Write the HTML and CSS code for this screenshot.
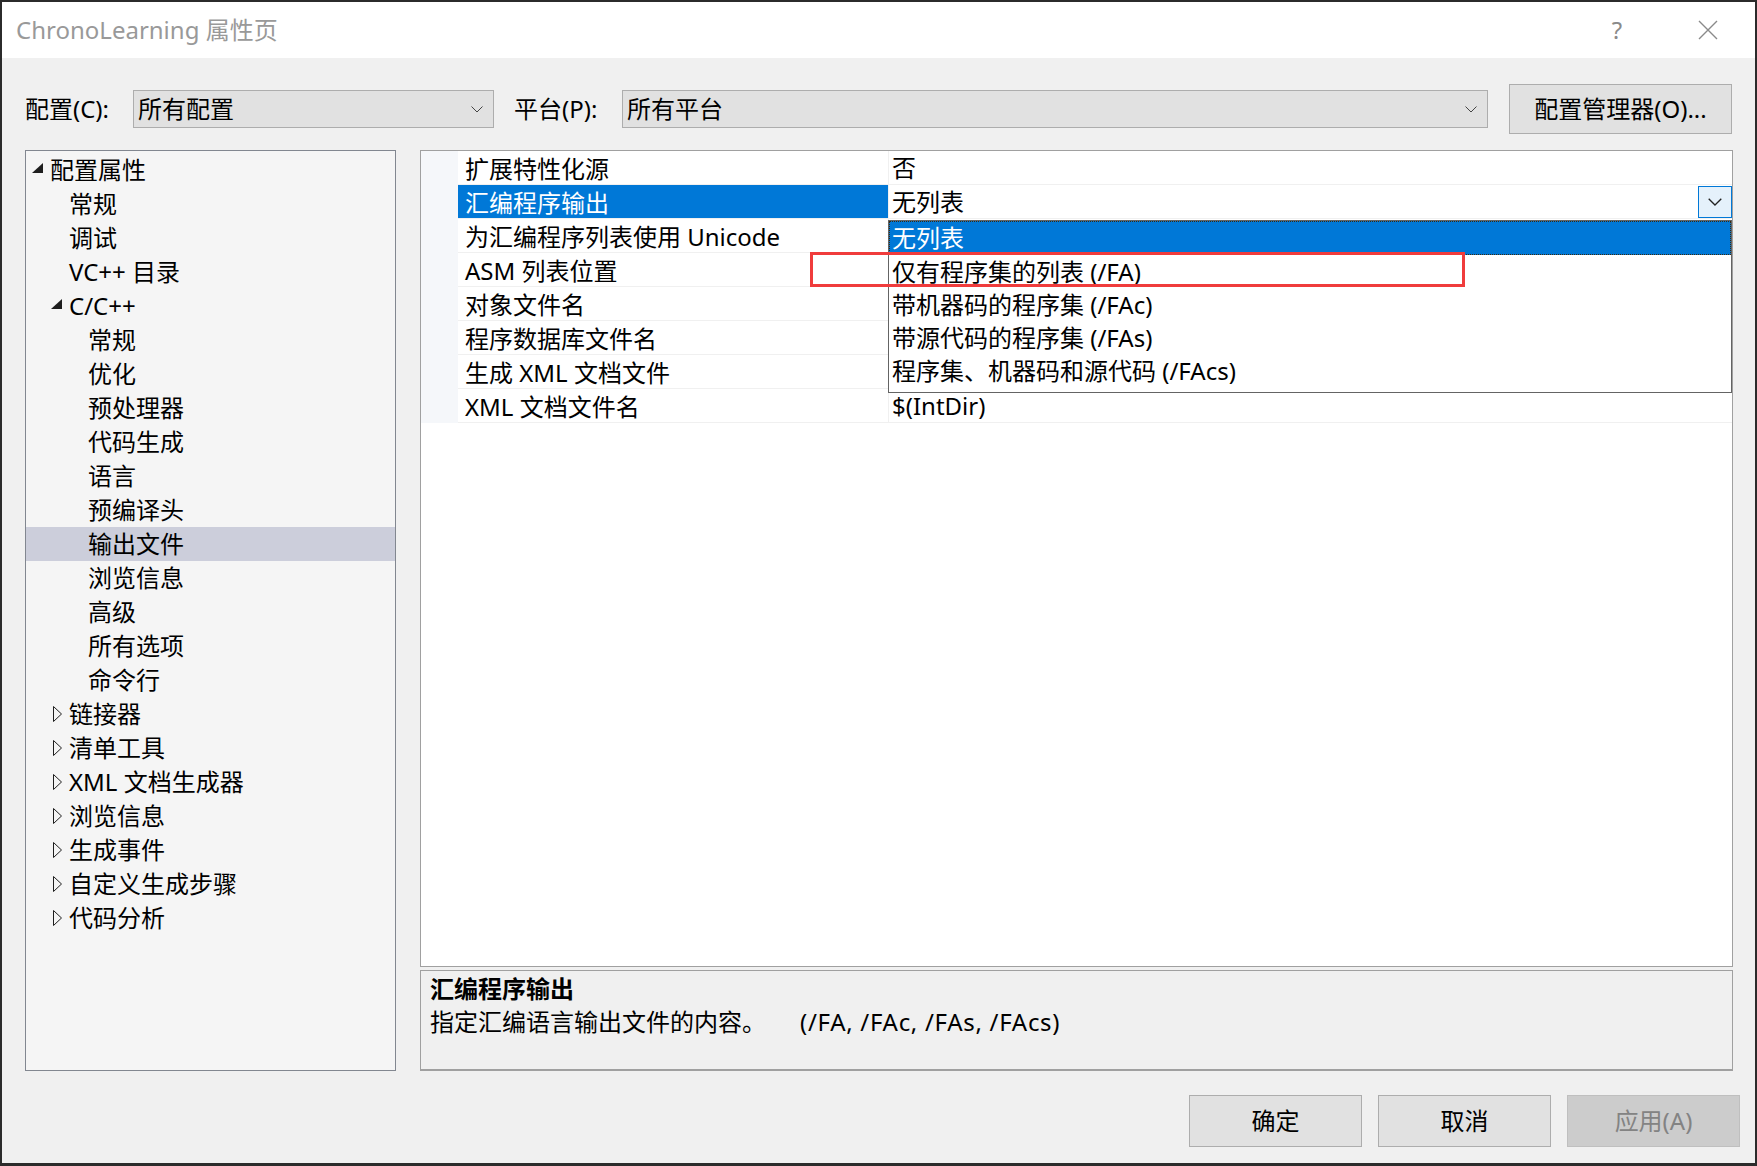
FILE: index.html
```html
<!DOCTYPE html>
<html lang="zh-CN">
<head>
    <meta charset="UTF-8">
    <title>ChronoLearning 属性页</title>
    <link rel="stylesheet" href="styles.css">
</head>
<body>
    <div class="window">
        <div class="titlebar">
            <span class="title">ChronoLearning 属性页</span>
            <span class="help">?</span>
            <span class="close">
                <svg width="20" height="20" viewBox="0 0 20 20"><path d="M1 1 L19 19 M19 1 L1 19" stroke="#8a8a8a" stroke-width="1.4" fill="none"/></svg>
            </span>
        </div>

        <div class="toolbar">
            <span class="tb-label">配置(C):</span>
            <div class="combo combo-config">
                <span class="combo-text">所有配置</span>
                <svg width="12" height="7" viewBox="0 0 12 7"><polyline points="0.5,0.5 6,6 11.5,0.5" stroke="#444" fill="none"/></svg>
            </div>
            <span class="tb-label">平台(P):</span>
            <div class="combo combo-platform">
                <span class="combo-text">所有平台</span>
                <svg width="12" height="7" viewBox="0 0 12 7"><polyline points="0.5,0.5 6,6 11.5,0.5" stroke="#444" fill="none"/></svg>
            </div>
            <button class="btn btn-manager">配置管理器(O)...</button>
        </div>

        <div class="main">
            <div class="tree">
                <div class="node l0"><span class="tw"><svg class="tri-open" width="11" height="10" viewBox="0 0 11 10"><polygon points="11,0 11,10 0,10" fill="#1e1e1e"/></svg></span>配置属性</div>
                <div class="node l1"><span class="tw"></span>常规</div>
                <div class="node l1"><span class="tw"></span>调试</div>
                <div class="node l1"><span class="tw"></span>VC++ 目录</div>
                <div class="node l1"><span class="tw"><svg class="tri-open" width="11" height="10" viewBox="0 0 11 10"><polygon points="11,0 11,10 0,10" fill="#1e1e1e"/></svg></span>C/C++</div>
                <div class="node l2"><span class="tw"></span>常规</div>
                <div class="node l2"><span class="tw"></span>优化</div>
                <div class="node l2"><span class="tw"></span>预处理器</div>
                <div class="node l2"><span class="tw"></span>代码生成</div>
                <div class="node l2"><span class="tw"></span>语言</div>
                <div class="node l2"><span class="tw"></span>预编译头</div>
                <div class="node l2 selected"><span class="tw"></span>输出文件</div>
                <div class="node l2"><span class="tw"></span>浏览信息</div>
                <div class="node l2"><span class="tw"></span>高级</div>
                <div class="node l2"><span class="tw"></span>所有选项</div>
                <div class="node l2"><span class="tw"></span>命令行</div>
                <div class="node l1"><span class="tw"><svg class="tri-closed" width="10" height="16" viewBox="0 0 10 16"><polygon points="0.5,0.5 8.5,8 0.5,15.5" fill="none" stroke="#1e1e1e"/></svg></span>链接器</div>
                <div class="node l1"><span class="tw"><svg class="tri-closed" width="10" height="16" viewBox="0 0 10 16"><polygon points="0.5,0.5 8.5,8 0.5,15.5" fill="none" stroke="#1e1e1e"/></svg></span>清单工具</div>
                <div class="node l1"><span class="tw"><svg class="tri-closed" width="10" height="16" viewBox="0 0 10 16"><polygon points="0.5,0.5 8.5,8 0.5,15.5" fill="none" stroke="#1e1e1e"/></svg></span>XML 文档生成器</div>
                <div class="node l1"><span class="tw"><svg class="tri-closed" width="10" height="16" viewBox="0 0 10 16"><polygon points="0.5,0.5 8.5,8 0.5,15.5" fill="none" stroke="#1e1e1e"/></svg></span>浏览信息</div>
                <div class="node l1"><span class="tw"><svg class="tri-closed" width="10" height="16" viewBox="0 0 10 16"><polygon points="0.5,0.5 8.5,8 0.5,15.5" fill="none" stroke="#1e1e1e"/></svg></span>生成事件</div>
                <div class="node l1"><span class="tw"><svg class="tri-closed" width="10" height="16" viewBox="0 0 10 16"><polygon points="0.5,0.5 8.5,8 0.5,15.5" fill="none" stroke="#1e1e1e"/></svg></span>自定义生成步骤</div>
                <div class="node l1"><span class="tw"><svg class="tri-closed" width="10" height="16" viewBox="0 0 10 16"><polygon points="0.5,0.5 8.5,8 0.5,15.5" fill="none" stroke="#1e1e1e"/></svg></span>代码分析</div>
            </div>

            <div class="right">
                <div class="grid">
                    <div class="prop-row">
                        <div class="gut"></div>
                        <div class="name">扩展特性化源</div>
                        <div class="value">否</div>
                    </div>
                    <div class="prop-row">
                        <div class="gut"></div>
                        <div class="name active">汇编程序输出</div>
                        <div class="value">
                            <span>无列表</span>
                            <span class="drop-btn">
                                <svg width="14" height="8" viewBox="0 0 14 8"><polyline points="0.7,0.7 7,7 13.3,0.7" stroke="#222" stroke-width="1.3" fill="none"/></svg>
                            </span>
                        </div>
                    </div>
                    <div class="prop-row">
                        <div class="gut"></div>
                        <div class="name">为汇编程序列表使用 Unicode</div>
                        <div class="value"></div>
                    </div>
                    <div class="prop-row">
                        <div class="gut"></div>
                        <div class="name">ASM 列表位置</div>
                        <div class="value"></div>
                    </div>
                    <div class="prop-row">
                        <div class="gut"></div>
                        <div class="name">对象文件名</div>
                        <div class="value"></div>
                    </div>
                    <div class="prop-row">
                        <div class="gut"></div>
                        <div class="name">程序数据库文件名</div>
                        <div class="value"></div>
                    </div>
                    <div class="prop-row">
                        <div class="gut"></div>
                        <div class="name">生成 XML 文档文件</div>
                        <div class="value"></div>
                    </div>
                    <div class="prop-row">
                        <div class="gut"></div>
                        <div class="name">XML 文档文件名</div>
                        <div class="value">$(IntDir)</div>
                    </div>

                    <div class="dropdown">
                        <div class="opt sel">无列表</div>
                        <div class="opt">仅有程序集的列表 (/FA)</div>
                        <div class="opt">带机器码的程序集 (/FAc)</div>
                        <div class="opt">带源代码的程序集 (/FAs)</div>
                        <div class="opt">程序集、机器码和源代码 (/FAcs)</div>
                    </div>
                    <div class="mark"></div>
                </div>

                <div class="desc">
                    <div class="desc-title">汇编程序输出</div>
                    <div>指定汇编语言输出文件的内容。<span class="desc-flags">(/FA, /FAc, /FAs, /FAcs)</span></div>
                </div>
            </div>
        </div>

        <div class="footer">
            <button class="btn">确定</button>
            <button class="btn">取消</button>
            <button class="btn" disabled>应用(A)</button>
        </div>
    </div>
</body>
</html>
```

FILE: styles.css
```css
* {
    box-sizing: border-box;
}
html, body {
    margin: 0;
}
body {
    background: #2b2b2b;
    padding: 2px 2px 3px 2px;
    font-family: "Noto Sans", "Noto Sans CJK SC", sans-serif;
    font-size: 24px;
    line-height: 34px;
    color: #000;
}
.window {
    height: 1161px;
    background: #f0f0f0;
    display: flex;
    flex-direction: column;
}

/* title bar */
.titlebar {
    height: 56px;
    flex-shrink: 0;
    background: #fff;
    display: flex;
    align-items: center;
    padding: 0 37px 0 14px;
    color: #999;
}
.title {
    flex: 1;
}
.help {
    width: 20px;
    text-align: center;
    margin-right: 71px;
    color: #8a8a8a;
}
.close {
    width: 20px;
    height: 20px;
    display: flex;
}

/* config / platform row */
.toolbar {
    margin-top: 26px;
    height: 50px;
    flex-shrink: 0;
    display: flex;
    align-items: center;
    padding-left: 23px;
}
.tb-label {
    width: 108px;
}
.combo {
    height: 38px;
    background: #e1e1e1;
    border: 1px solid #adadad;
    display: flex;
    align-items: center;
    padding: 0 10px 0 4px;
}
.combo-text {
    flex: 1;
}
.combo-config {
    width: 361px;
    margin-right: 20px;
}
.combo-platform {
    width: 866px;
    margin-right: 21px;
}
.btn {
    font: inherit;
    background: #e1e1e1;
    border: 1px solid #adadad;
    color: #000;
    padding: 0;
}
.btn:disabled {
    background: #cccccc;
    border-color: #bfbfbf;
    color: #838383;
}
.btn-manager {
    width: 223px;
    height: 50px;
}

/* tree + grid */
.main {
    margin-top: 16px;
    height: 921px;
    flex-shrink: 0;
    display: flex;
    gap: 24px;
    padding: 0 22px 0 23px;
}
.tree {
    width: 371px;
    border: 1px solid #828790;
    background: #f5f5f5;
    padding-top: 2px;
}
.node {
    height: 34px;
    display: flex;
    align-items: center;
    white-space: nowrap;
}
.node.l0 { padding-left: 5px; }
.node.l1 { padding-left: 24px; }
.node.l2 { padding-left: 43px; }
.node.selected {
    background: #cccedb;
}
.tw {
    width: 19px;
    height: 34px;
    display: flex;
    align-items: center;
}
.tri-open {
    margin: 0 0 4px 1px;
}
.tri-closed {
    margin-left: 3px;
}

.right {
    flex: 1;
    display: flex;
    flex-direction: column;
    gap: 3px;
}
.grid {
    flex: 1;
    position: relative;
    background: #fff;
    border: 1px solid #a0a0a0;
}
.prop-row {
    display: flex;
    height: 34px;
}
.gut {
    width: 37px;
    background: #f5f7fa;
}
.name {
    width: 431px;
    padding: 1px 0 0 7px;
    border-right: 1px solid #f0f0f0;
    border-bottom: 1px solid #f0f0f0;
    line-height: 33px;
    white-space: nowrap;
}
.name.active {
    background: #0078d7;
    color: #fff;
}
.value {
    flex: 1;
    display: flex;
    align-items: center;
    padding: 1px 0 0 3px;
    border-bottom: 1px solid #f0f0f0;
}
.drop-btn {
    margin: -1px 0 0 auto;
    width: 34px;
    height: 32px;
    border: 1px solid #0078d7;
    background: #e5f1fb;
    display: flex;
    align-items: center;
    justify-content: center;
}

.dropdown {
    position: absolute;
    left: 467px;
    top: 69px;
    width: 844px;
    height: 173px;
    border: 1px solid #646464;
    background: #fff;
}
.opt {
    height: 33px;
    line-height: 33px;
    padding-left: 3px;
    white-space: nowrap;
}
.opt.sel {
    height: 34px;
    line-height: 34px;
    background: #0078d7;
    color: #fff;
    outline: 1px dotted #3a2a10;
    outline-offset: -1px;
}
.mark {
    position: absolute;
    left: 389px;
    top: 101px;
    width: 655px;
    height: 35px;
    border: 3px solid #f03c3c;
}

.desc {
    height: 101px;
    background: #f0f0f0;
    border: 1px solid #a0a0a0;
    border-bottom-width: 2px;
    padding: 1px 9px;
    line-height: 33px;
}
.desc-title {
    font-weight: bold;
}
.desc-flags {
    margin-left: 34px;
    letter-spacing: 0.7px;
}

/* OK / Cancel / Apply */
.footer {
    margin-top: 24px;
    height: 52px;
    flex-shrink: 0;
    display: flex;
    justify-content: flex-end;
    gap: 16px;
    padding-right: 15px;
}
.footer .btn {
    width: 173px;
}
```
